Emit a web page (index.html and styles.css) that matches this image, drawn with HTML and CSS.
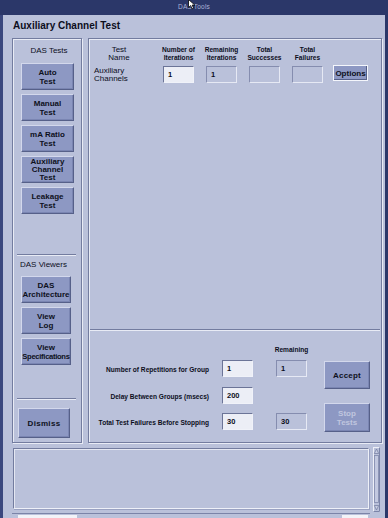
FILE: index.html
```html
<!DOCTYPE html>
<html>
<head>
<meta charset="utf-8">
<link rel="stylesheet" href="styles.css">
</head>
<body>
<div class="titlebar">
  <span class="tb-title">DAS Tools</span>
  <svg class="cursor" width="9" height="11" viewBox="0 0 9 11"><path d="M0.5 0.5 L0.5 8.5 L2.6 6.6 L4.2 9.8 L5.6 9.1 L4.1 6.1 L6.9 6.1 Z" fill="#fff" stroke="#000" stroke-width="0.8"/></svg>
</div>
<div class="window">
  <h1 class="heading">Auxiliary Channel Test</h1>
  <div class="main">
    <div class="side etched">
      <div class="side-title">DAS Tests</div>
      <div class="btn-group tests-group">
        <div class="btn side-btn"><span>Auto</span><span>Test</span></div>
        <div class="btn side-btn"><span>Manual</span><span>Test</span></div>
        <div class="btn side-btn"><span>mA Ratio</span><span>Test</span></div>
        <div class="btn side-btn three"><span>Auxiliary</span><span>Channel</span><span>Test</span></div>
        <div class="btn side-btn"><span>Leakage</span><span>Test</span></div>
      </div>
      <div class="sep side-sep sep-1"></div>
      <div class="side-label">DAS Viewers</div>
      <div class="btn-group viewers-group">
        <div class="btn side-btn narrow"><span>DAS</span><span>Architecture</span></div>
        <div class="btn side-btn narrow"><span>View</span><span>Log</span></div>
        <div class="btn side-btn narrow"><span>View</span><span class="tight">Specifications</span></div>
      </div>
      <div class="sep side-sep sep-2"></div>
      <div class="btn dismiss"><span>Dismiss</span></div>
    </div>
    <div class="content etched">
      <div class="tests">
        <div class="tests-grid">
          <div class="col-head name-head">Test<br>Name</div>
          <div class="col-head small-head">Number of<br>Iterations</div>
          <div class="col-head small-head">Remaining<br>Iterations</div>
          <div class="col-head small-head">Total<br>Successes</div>
          <div class="col-head small-head">Total<br>Failures</div>
          <div></div>
          <div class="row-label">Auxiliary<br>Channels</div>
          <div class="field input cell">1</div>
          <div class="field output cell">1</div>
          <div class="field output cell"></div>
          <div class="field output cell"></div>
          <div class="btn options"><span>Options</span></div>
        </div>
      </div>
      <div class="sep content-sep"></div>
      <div class="settings">
        <div class="form">
          <div class="rem-head">Remaining</div>
          <div class="form-row row-1">
            <div class="form-label">Number of Repetitions for Group</div>
            <div class="field input">1</div>
            <div class="field output rem">1</div>
          </div>
          <div class="form-row row-2">
            <div class="form-label">Delay Between Groups (msecs)</div>
            <div class="field input">200</div>
          </div>
          <div class="form-row row-3">
            <div class="form-label">Total Test Failures Before Stopping</div>
            <div class="field input">30</div>
            <div class="field output rem">30</div>
          </div>
        </div>
        <div class="actions">
          <div class="btn accept"><span>Accept</span></div>
          <div class="btn stop"><span>Stop</span><span>Tests</span></div>
        </div>
      </div>
    </div>
  </div>
  <div class="logrow">
    <div class="log"></div>
    <svg class="vscroll" width="7" height="65" viewBox="0 0 7 65">
      <rect x="0.5" y="0.5" width="6" height="64" fill="#bac1da" stroke="#eef0f8"/>
      <path d="M0.5 64.5 L6.5 64.5 L6.5 0.5" fill="none" stroke="#7b84a8"/>
      <path d="M3.5 2 L1.3 6.5 L5.7 6.5 Z" fill="#c9cee4" stroke="#6f789c" stroke-width="0.7"/>
      <rect x="1.5" y="8.5" width="4" height="47" fill="#c3c9e0" stroke="#7f88ab" stroke-width="0.8"/>
      <path d="M3.5 63 L1.3 58.5 L5.7 58.5 Z" fill="#c9cee4" stroke="#6f789c" stroke-width="0.7"/>
    </svg>
  </div>
  <div class="hscroll">
    <div class="hs-white hs-left"></div>
    <div class="hs-white hs-right"></div>
  </div>
</div>
</body>
</html>
```

FILE: styles.css
```css
:root {
  --bg: #bac1da;
  --btn: #8d98c3;
  --light: #e8ebf5;
  --dark: #737c9f;
  --navy: #2b3769;
  --edge: #3a477e;
  --field: #eceef6;
}

* { box-sizing: border-box; }

html, body {
  margin: 0;
  padding: 0;
}

body {
  width: 388px;
  height: 518px;
  overflow: hidden;
  background: var(--bg);
  font-family: "Liberation Sans", Arial, sans-serif;
  color: #0c0e1c;
  position: relative;
}

.titlebar {
  height: 15px;
  background: var(--navy);
  display: flex;
  justify-content: center;
  padding-top: 3px;
  position: relative;
}

.tb-title {
  font-size: 6.5px;
  line-height: 8px;
  color: #aab3d6;
  letter-spacing: 0.2px;
}

.cursor {
  position: absolute;
  left: 188px;
  top: -1px;
}

.window {
  height: 503px;
  border-left: 3px solid var(--edge);
  border-right: 3px solid var(--navy);
  display: flex;
  flex-direction: column;
}

.heading {
  margin: 0;
  padding: 5px 0 0 10px;
  font-size: 10px;
  line-height: 12px;
  font-weight: bold;
  height: 17px;
  margin-bottom: 6px;
}

.main {
  display: flex;
  gap: 6px;
  padding-left: 9px;
  height: 405px;
}

.etched {
  border: 1px solid var(--dark);
  box-shadow: inset 1px 1px 0 var(--light), 1px 1px 0 var(--light);
}

.sep {
  height: 2px;
  border-top: 1px solid var(--dark);
  border-bottom: 1px solid var(--light);
}

/* side panel */
.side {
  width: 70px;
  display: flex;
  flex-direction: column;
  align-items: flex-start;
}

.side-title {
  margin-top: 7px;
  margin-left: 8px;
  width: 56px;
  text-align: center;
  font-size: 8px;
  line-height: 10px;
}

.side-label {
  margin-top: 4px;
  margin-left: 7px;
  font-size: 8px;
  line-height: 10px;
  white-space: nowrap;
}

.btn-group {
  display: flex;
  flex-direction: column;
  gap: 4px;
  margin-left: 8px;
}

.tests-group { margin-top: 7px; }
.viewers-group { margin-top: 6px; }

.btn {
  background: var(--btn);
  border: 1px solid;
  border-color: #d3d8ec #566089 #566089 #d3d8ec;
  box-shadow: inset -1px -1px 0 #7a85b2;
  display: flex;
  flex-direction: column;
  align-items: center;
  justify-content: center;
  font-size: 8px;
  font-weight: bold;
  line-height: 9px;
  overflow: hidden;
  white-space: nowrap;
  color: #0e1020;
}

.side-btn {
  width: 53px;
  height: 27px;
}

.side-btn.three { line-height: 8px; }
.side-btn.narrow { width: 50px; }

.tight {
  font-size: 7.6px;
  letter-spacing: -0.3px;
}

.side-sep {
  width: 59px;
  margin-left: 4px;
}

.sep-1 { margin-top: 40px; }
.sep-2 { margin-top: 33px; }

.dismiss {
  margin-top: 8px;
  margin-left: 5px;
  width: 52px;
  height: 30px;
  letter-spacing: 0.3px;
}

/* content panel */
.content {
  width: 294px;
  display: flex;
  flex-direction: column;
}

.tests {
  height: 290px;
}

.tests-grid {
  display: grid;
  grid-template-columns: 63px 43px 43px 43px 43px auto;
  row-gap: 3px;
  margin-top: 7px;
  padding-left: 5px;
  align-items: start;
}

.col-head {
  height: 16px;
  line-height: 8px;
  text-align: center;
  justify-self: center;
  white-space: nowrap;
}

.name-head {
  font-size: 8px;
  width: 50px;
  justify-self: start;
}

.small-head {
  font-size: 6.6px;
  font-weight: bold;
}

.row-label {
  font-size: 8px;
  line-height: 8px;
  margin-top: 2px;
}

.field {
  width: 31px;
  height: 17px;
  border: 1px solid;
  border-color: #6b7497 #f0f2f9 #f0f2f9 #6b7497;
  font-size: 7.5px;
  font-weight: bold;
  line-height: 15px;
  padding-left: 4px;
}

.field.input { background: var(--field); }
.field.output {
  background: var(--bg);
  border-color: #858daf #e6e9f4 #e6e9f4 #858daf;
}

.cell {
  justify-self: center;
  margin-top: 1px;
}

.options {
  margin-left: 4px;
  width: 35px;
  height: 16px;
  border: 1px solid #f4f6fc;
  box-shadow: inset -1px -1px 0 #566089;
}

.content-sep {
  margin: 0 1px;
}

.settings {
  flex: 1;
  display: flex;
  padding-top: 15px;
}

.form {
  display: flex;
  flex-direction: column;
  width: 218px;
}

.rem-head {
  margin-left: 187px;
  width: 31px;
  display: flex;
  justify-content: center;
  font-size: 6.6px;
  font-weight: bold;
  line-height: 8px;
  white-space: nowrap;
}

.form-row {
  display: flex;
  align-items: center;
  height: 17px;
}

.row-1 { margin-top: 6px; }
.row-2 { margin-top: 10px; }
.row-3 { margin-top: 9px; }

.form-label {
  width: 120px;
  text-align: right;
  font-size: 6.6px;
  font-weight: bold;
  white-space: nowrap;
  margin-right: 13px;
  padding-top: 2px;
}

.rem { margin-left: 23px; }

.actions {
  display: flex;
  flex-direction: column;
  margin-left: 17px;
  padding-top: 15px;
}

.accept {
  width: 46px;
  height: 28px;
  font-size: 8px;
  letter-spacing: 0.2px;
}

.stop {
  margin-top: 14px;
  width: 46px;
  height: 29px;
  color: #c0c6df;
  font-weight: bold;
  font-size: 8px;
  line-height: 9px;
}

/* log */
.logrow {
  display: flex;
  margin-top: 4px;
  padding-left: 10px;
  height: 65px;
}

.log {
  margin-top: 1px;
  width: 356px;
  height: 61px;
  border: 1px solid;
  border-color: #737c9f #eef0f8 #eef0f8 #737c9f;
  box-shadow: inset 1px 1px 0 #e4e7f2, 1px 1px 0 #9aa2c2;
}

.vscroll {
  margin-left: 4px;
  display: block;
}

.hscroll {
  margin-top: 1px;
  margin-left: 9px;
  width: 358px;
  height: 5px;
  border-top: 1px solid #7b84a8;
  display: flex;
  justify-content: space-between;
  align-items: flex-end;
}

.hs-white {
  height: 3px;
  background: #f2f3f8;
}

.hs-left { width: 59px; margin-left: 6px; }
.hs-right { width: 26px; margin-right: 2px; }
```
